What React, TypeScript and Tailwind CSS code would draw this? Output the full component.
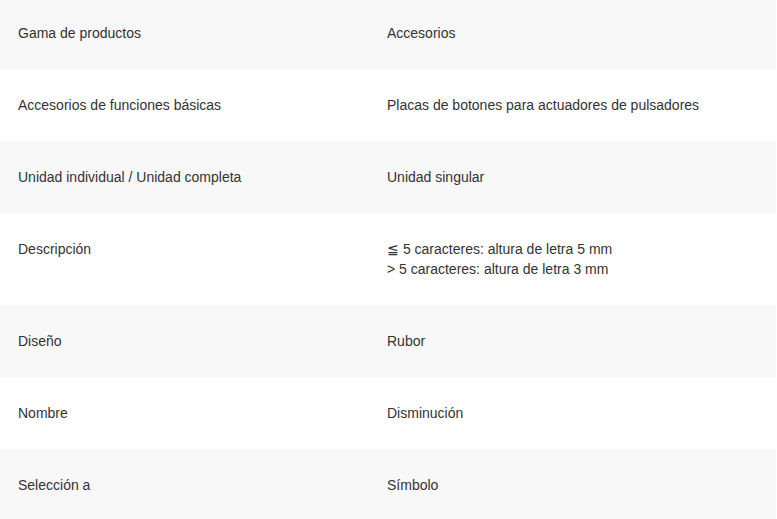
const rows: { label: string; value: string[] }[] = [
  { label: "Gama de productos", value: ["Accesorios"] },
  { label: "Accesorios de funciones básicas", value: ["Placas de botones para actuadores de pulsadores"] },
  { label: "Unidad individual / Unidad completa", value: ["Unidad singular"] },
  {
    label: "Descripción",
    value: ["≦ 5 caracteres: altura de letra 5 mm", "> 5 caracteres: altura de letra 3 mm"],
  },
  { label: "Diseño", value: ["Rubor"] },
  { label: "Nombre", value: ["Disminución"] },
  { label: "Selección a", value: ["Símbolo"] },
];

export default function App() {
  return (
    <div className="w-[777px] h-[519px] overflow-hidden bg-white font-['Liberation_Sans',Arial,sans-serif] text-[14px] leading-[20px] text-[#333]">
      <div className="w-[776px]">
        {rows.map((row, i) => (
          <div
            key={row.label}
            className={
              "grid grid-cols-[387px_1fr] pb-[26px] " +
              (i === 0 ? "pt-[23px] " : "pt-[26px] ") +
              (i % 2 === 0 ? "bg-[#f8f8f8]" : "bg-white")
            }
          >
            <div className="pl-[18px]">{row.label}</div>
            <div>
              {row.value.map((v) => (
                <div key={v}>{v}</div>
              ))}
            </div>
          </div>
        ))}
      </div>
    </div>
  );
}
